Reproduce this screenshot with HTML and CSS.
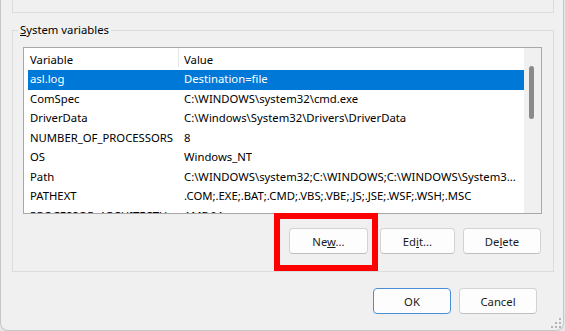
FILE: index.html
```html
<!DOCTYPE html>
<html lang="en">
<head>
    <meta charset="UTF-8">
    <title>Environment Variables</title>
    <link rel="stylesheet" href="styles.css">
</head>
<body>
    <div class="window">
        <!-- bottom edge of the user variables group, scrolled out of view -->
        <div class="user-group"></div>

        <div class="group">
            <span class="group-title"><u>S</u>ystem variables</span>

            <div class="list">
                <div class="list-body">
                    <div class="list-head">
                        <span class="col-name">Variable</span>
                        <span class="col-value">Value</span>
                    </div>
                    <div class="row selected">
                        <span class="col-name">asl.log</span>
                        <span class="col-value">Destination=file</span>
                    </div>
                    <div class="row">
                        <span class="col-name">ComSpec</span>
                        <span class="col-value">C:\WINDOWS\system32\cmd.exe</span>
                    </div>
                    <div class="row">
                        <span class="col-name">DriverData</span>
                        <span class="col-value">C:\Windows\System32\Drivers\DriverData</span>
                    </div>
                    <div class="row">
                        <span class="col-name">NUMBER_OF_PROCESSORS</span>
                        <span class="col-value">8</span>
                    </div>
                    <div class="row">
                        <span class="col-name">OS</span>
                        <span class="col-value">Windows_NT</span>
                    </div>
                    <div class="row">
                        <span class="col-name">Path</span>
                        <span class="col-value">C:\WINDOWS\system32;C:\WINDOWS;C:\WINDOWS\System3...</span>
                    </div>
                    <div class="row">
                        <span class="col-name">PATHEXT</span>
                        <span class="col-value">.COM;.EXE;.BAT;.CMD;.VBS;.VBE;.JS;.JSE;.WSF;.WSH;.MSC</span>
                    </div>
                    <div class="row">
                        <span class="col-name">PROCESSOR_ARCHITECTU...</span>
                        <span class="col-value">AMD64</span>
                    </div>
                </div>
                <div class="scrollbar"><div class="thumb"></div></div>
            </div>

            <div class="group-buttons">
                <button class="btn btn-new">Ne<u>w</u>...</button>
                <button class="btn btn-edit">Ed<u>i</u>t...</button>
                <button class="btn btn-delete">De<u>l</u>ete</button>
            </div>
        </div>

        <div class="dialog-buttons">
            <button class="btn btn-default">OK</button>
            <button class="btn">Cancel</button>
        </div>

        <!-- resize grip -->
        <svg class="grip" width="11" height="11" viewBox="0 0 11 11">
            <rect x="8" y="0" width="2" height="2" fill="#b4b4b4"/>
            <rect x="4" y="4" width="2" height="2" fill="#b4b4b4"/>
            <rect x="8" y="4" width="2" height="2" fill="#b4b4b4"/>
            <rect x="0" y="8" width="2" height="2" fill="#b4b4b4"/>
            <rect x="4" y="8" width="2" height="2" fill="#b4b4b4"/>
            <rect x="8" y="8" width="2" height="2" fill="#b4b4b4"/>
        </svg>
    </div>

    <!-- annotation box around the New button -->
    <div class="highlight"></div>
</body>
</html>
```

FILE: styles.css
```css
body {
    margin: 0;
    background-color: #e6e6e6;
    font-family: "Noto Sans", sans-serif;
    font-size: 11.3px;
    color: #000;
    position: relative;
    width: 565px;
    height: 331px;
    overflow: hidden;
}
.window {
    position: relative;
    box-sizing: border-box;
    width: 564px;
    height: 331px;
    padding: 0 9px 0 11px;
    background-color: #f0f0f0;
    border: 1px solid #c6c6c6;
    border-top: none;
    border-radius: 0 0 8px 8px;
}
.user-group {
    height: 12px;
    border: 1px solid #dcdcdc;
    border-top: none;
}
.group {
    position: relative;
    box-sizing: border-box;
    height: 242px;
    margin-top: 17px;
    padding: 16px 11px 0 10px;
    border: 1px solid #dcdcdc;
}
.group-title {
    position: absolute;
    top: -9px;
    left: 5px;
    padding: 0 2px;
    line-height: 16px;
    background-color: #f0f0f0;
}
u {
    text-underline-offset: 1px;
}
.list {
    display: flex;
    box-sizing: border-box;
    height: 167px;
    border: 1px solid #a8a8a8;
    background-color: #fff;
}
.list-body {
    flex: 1;
    overflow: hidden;
}
.list-head, .row {
    display: flex;
    align-items: center;
    margin-left: 4px;
    white-space: nowrap;
}
.list-head {
    height: 22px;
    align-items: flex-start;
}
.row {
    box-sizing: border-box;
    height: 19.5px;
    padding-bottom: 2px;
}
.col-name {
    box-sizing: border-box;
    flex: none;
    width: 156px;
    padding-left: 2px;
    overflow: hidden;
}
.list-head .col-name {
    width: 151px;
    height: 19px;
    margin-right: 5px;
    border-right: 1px solid #e5e5e5;
    overflow: visible;
}
.list-head span {
    line-height: 24px;
}
.col-value {
    overflow: hidden;
}
.row.selected {
    background-color: #0078d7;
    color: #fff;
}
.scrollbar {
    flex: none;
    width: 17px;
    background-color: #f0f0f0;
}
.thumb {
    width: 5px;
    height: 53px;
    margin: 18px 0 0 5px;
    border-radius: 3px;
    background-color: #8a8a8a;
}
.group-buttons, .dialog-buttons {
    display: flex;
    justify-content: flex-end;
}
.group-buttons {
    margin-top: 14px;
    gap: 8px;
    padding-right: 1px;
}
.dialog-buttons {
    margin-top: 16px;
    gap: 8px;
    padding-right: 17px;
}
.btn {
    box-sizing: border-box;
    width: 78px;
    height: 26px;
    padding: 0;
    font-family: inherit;
    font-size: 11.3px;
    color: #1b1b1b;
    background-color: #fdfdfd;
    border: 1px solid #d3d3d3;
    border-bottom-color: #c0c0c0;
    border-radius: 4px;
}
.btn-new {
    width: 79px;
    margin-right: 4px;
}
.btn-edit {
    width: 75px;
}
.btn-default {
    border-color: #4a8fd6;
}
.grip {
    position: absolute;
    right: 1px;
    bottom: 1px;
}
.highlight {
    position: absolute;
    left: 274px;
    top: 213px;
    width: 92px;
    height: 46px;
    border: 6px solid #ff0000;
}
```
